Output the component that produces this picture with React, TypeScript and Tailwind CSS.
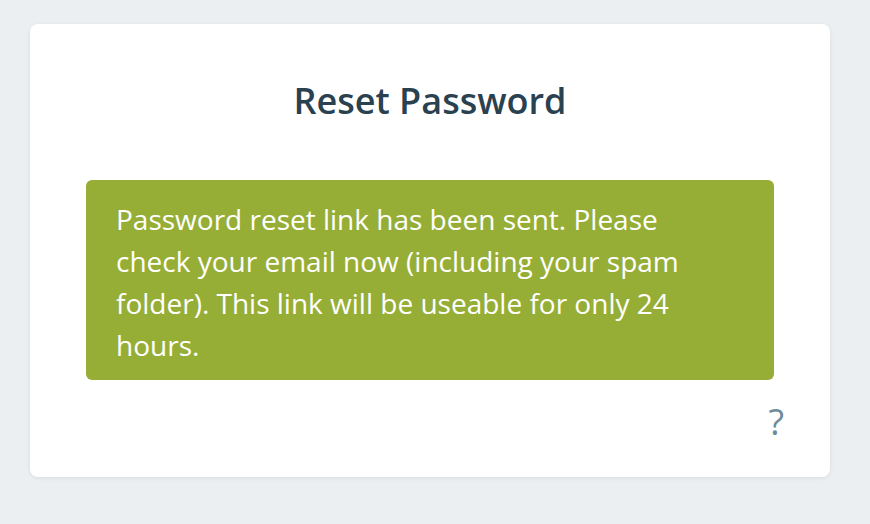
import React from "react";

export default function App() {
  return (
    <div
      className="min-h-[524px] bg-[#eceff1] pl-[30px] pr-[40px] pt-[24px] pb-[47px]"
      style={{ fontFamily: '"Open Sans", "Noto Sans", sans-serif' }}
    >
      <div className="rounded-[8px] bg-white px-[56px] pt-[53px] pb-[31px] shadow-[0_1px_4px_rgba(0,0,0,0.08)]">
        <h1 className="text-center text-[36px] leading-[48px] font-semibold text-[#2a4150]">
          Reset Password
        </h1>
        <div className="mt-[55px] rounded-[6px] bg-[#96ae36] pl-[30px] pr-[40px] pt-[18px] pb-[14px] text-[28px] leading-[42px] text-white">
          Password reset link has been sent. Please check your email now (including your spam folder). This link will be useable for only 24 hours.
        </div>
        <div className="mt-[18px] -mr-[10px] flex justify-end">
          <span className="text-[36px] leading-[48px] text-[#6f8a99]">?</span>
        </div>
      </div>
    </div>
  );
}
